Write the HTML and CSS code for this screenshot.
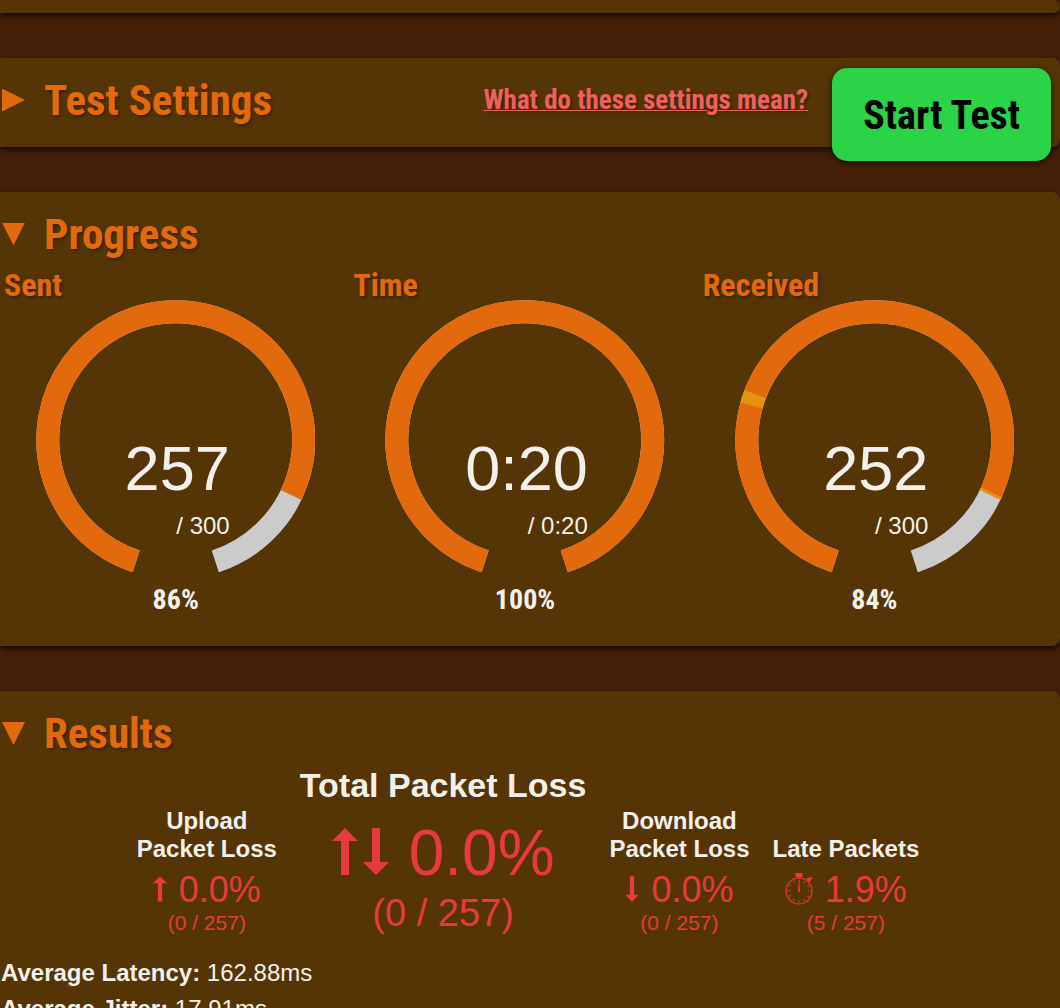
FILE: index.html
```html
<!DOCTYPE html>
<html lang="en">
<head>
    <meta charset="UTF-8">
    <meta name="viewport" content="width=device-width, initial-scale=1.0">
    <title>Packet Loss Test</title>
    <link rel="stylesheet" href="styles.css">
</head>
<body>
    <!-- shared icons -->
    <svg class="icon-defs" width="0" height="0" aria-hidden="true">
        <symbol id="arrow-up" viewBox="0 0 26 47">
            <path d="M13 0L26 13H17V47H9V13H0Z"/>
        </symbol>
        <symbol id="arrow-down" viewBox="0 0 26 47">
            <path d="M13 47L26 34H17V0H9V34H0Z"/>
        </symbol>
        <symbol id="stopwatch" viewBox="0 0 28 32">
            <path d="M10.500 0H17.500V4H16V5H12V4H10.500ZM21.500 6L23 4.500L25 5L26 3.500L27.500 5L26.500 6.500L25.500 8L24 9Z"/>
            <circle cx="14" cy="18" r="13" fill="none" stroke="currentColor" stroke-width="1.200"/>
            <circle cx="14" cy="18" r="10.500" fill="none" stroke="currentColor" stroke-width="2" stroke-dasharray="1.200 4.298" stroke-dashoffset="0.600"/>
            <path d="M13.600 8H14.400L15 19H13Z"/>
        </symbol>
    </svg>

    <main>
        <section class="panel panel-intro"></section>

        <section class="panel settings">
            <details>
                <summary><h2>Test Settings</h2></summary>
            </details>
            <a class="help-link" href="#settings-help">What do these settings mean?</a>
            <button type="button" class="start-btn">Start Test</button>
        </section>

        <section class="panel">
            <details open>
                <summary><h2>Progress</h2></summary>
                <div class="gauges">
                    <div class="gauge">
                        <h3>Sent</h3>
                        <div class="dial">
                            <svg viewBox="0 0 280 273" aria-hidden="true">
                                <path class="track" d="M100.370 261.950A128.200 128.200 0 1 1 179.630 261.950"/>
                                <path class="fill" pathLength="300" stroke-dasharray="257 400" d="M100.370 261.950A128.200 128.200 0 1 1 179.630 261.950"/>
                            </svg>
                            <div class="readout">
                                <div class="count">257</div>
                                <div class="total">/ 300</div>
                            </div>
                        </div>
                        <div class="percent">86%</div>
                    </div>
                    <div class="gauge">
                        <h3>Time</h3>
                        <div class="dial">
                            <svg viewBox="0 0 280 273" aria-hidden="true">
                                <path class="track" d="M100.370 261.950A128.200 128.200 0 1 1 179.630 261.950"/>
                                <path class="fill" d="M100.370 261.950A128.200 128.200 0 1 1 179.630 261.950"/>
                            </svg>
                            <div class="readout">
                                <div class="count">0:20</div>
                                <div class="total">/ 0:20</div>
                            </div>
                        </div>
                        <div class="percent">100%</div>
                    </div>
                    <div class="gauge">
                        <h3>Received</h3>
                        <div class="dial">
                            <svg viewBox="0 0 280 273" aria-hidden="true">
                                <path class="track" d="M100.370 261.950A128.200 128.200 0 1 1 179.630 261.950"/>
                                <path class="fill" pathLength="300" stroke-dasharray="256 400" d="M100.370 261.950A128.200 128.200 0 1 1 179.630 261.950"/>
                                <!-- late packets -->
                                <path class="late" pathLength="300" stroke-dasharray="0 81 5 170 1 400" d="M100.370 261.950A128.200 128.200 0 1 1 179.630 261.950"/>
                            </svg>
                            <div class="readout">
                                <div class="count">252</div>
                                <div class="total">/ 300</div>
                            </div>
                        </div>
                        <div class="percent">84%</div>
                    </div>
                </div>
            </details>
        </section>

        <section class="panel">
            <details open>
                <summary><h2>Results</h2></summary>
                <div class="results">
                    <div class="result">
                        <h4>Upload<br>Packet Loss</h4>
                        <div class="value"><svg class="arrow"><use href="#arrow-up"/></svg>0.0%</div>
                        <div class="detail">(0 / 257)</div>
                    </div>
                    <div class="result result-main">
                        <h4>Total Packet Loss</h4>
                        <div class="value"><svg class="arrow"><use href="#arrow-up"/></svg><svg class="arrow"><use href="#arrow-down"/></svg>0.0%</div>
                        <div class="detail">(0 / 257)</div>
                    </div>
                    <div class="result">
                        <h4>Download<br>Packet Loss</h4>
                        <div class="value"><svg class="arrow"><use href="#arrow-down"/></svg>0.0%</div>
                        <div class="detail">(0 / 257)</div>
                    </div>
                    <div class="result">
                        <h4>Late Packets</h4>
                        <div class="value"><svg class="watch"><use href="#stopwatch"/></svg>1.9%</div>
                        <div class="detail">(5 / 257)</div>
                    </div>
                </div>
                <div class="stats">
                    <div><strong>Average Latency:</strong> 162.88ms</div>
                    <div><strong>Average Jitter:</strong> 17.91ms</div>
                </div>
            </details>
        </section>
    </main>
</body>
</html>
```
FILE: styles.css
```css
* {
    box-sizing: border-box;
}
body {
    margin: 0;
    background: #452009;
    color: #f3f0ec;
    font-family: "Liberation Sans", Arial, sans-serif;
    font-size: 24px;
    overflow-x: hidden;
}
h2, h3, h4 {
    margin: 0;
}
.icon-defs {
    position: absolute;
}
.panel {
    position: relative;
    margin-bottom: 45px;
    background: #553506;
    border-radius: 0 8px 8px 0;
    box-shadow: 0 3px 6px rgba(0, 0, 0, 0.7);
}
.panel-intro {
    height: 13px;
}

/* headings */
summary {
    display: flex;
    align-items: center;
    padding: 17px 0 0 2px;
    color: #e3690d;
    cursor: pointer;
    list-style: none;
}
summary::-webkit-details-marker {
    display: none;
}
summary::before {
    content: "";
    width: 23px;
    height: 23px;
    margin-right: 19px;
    background: #e3690d;
    clip-path: polygon(0 0, 100% 50%, 0 100%);
}
details[open] > summary::before {
    clip-path: polygon(0 0, 100% 0, 50% 100%);
}
h2, h3, .help-link, .start-btn, .percent {
    font-family: "Roboto Condensed", "Arial Narrow", "Liberation Sans", sans-serif;
    font-weight: bold;
}
h2 {
    font-size: 43px;
    line-height: 50px;
    text-shadow: 2px 2px 3px rgba(0, 0, 0, 0.3);
}
h3 {
    padding-left: 3px;
    font-size: 32px;
    line-height: 30px;
    color: #e3690d;
    text-shadow: 2px 2px 3px rgba(0, 0, 0, 0.3);
}

/* settings bar */
.settings {
    display: flex;
    align-items: flex-start;
    padding-right: 252px;
    padding-bottom: 22px;
    z-index: 1;
}
.settings details {
    flex: 1;
}
.help-link {
    margin-top: 26px;
    color: #ee6060;
    font-size: 27px;
    line-height: 32px;
    text-decoration-thickness: 1px;
    text-shadow: 2px 2px 3px rgba(0, 0, 0, 0.3);
}
.start-btn {
    position: absolute;
    top: 10px;
    right: 9px;
    padding: 23px 31px 21px;
    border: none;
    border-radius: 15px;
    background: #2bd348;
    color: #000;
    font-size: 40px;
    line-height: 49px;
    cursor: pointer;
    box-shadow: 0 2px 6px rgba(0, 0, 0, 0.7);
}

/* progress gauges */
.gauges {
    display: grid;
    grid-template-columns: repeat(3, 1fr);
    padding: 11px 11px 30px 1px;
}
.dial {
    position: relative;
    width: 80%;
    margin: 0 auto;
}
.dial svg {
    display: block;
    width: 100%;
}
.dial path {
    fill: none;
    stroke-width: 23;
}
.dial .track {
    stroke: #cbcbcb;
}
.dial .fill {
    stroke: #e3690d;
}
.dial .late {
    stroke: #e5920e;
}
.readout {
    position: absolute;
    top: 50%;
    left: 50%;
    padding-left: 3px;
    transform: translateX(-50%);
    text-align: right;
}
.count {
    font-size: 63px;
    line-height: 64px;
    margin-bottom: 12px;
}
.total {
    line-height: 28px;
}
.percent {
    margin-top: 12px;
    font-size: 28px;
    line-height: 32px;
    text-align: center;
}

/* results */
.results {
    display: flex;
    justify-content: center;
    align-items: flex-end;
    gap: 23px;
    padding: 8px 4px 0 0;
    text-align: center;
}
.result h4 {
    margin-bottom: 7px;
    font-size: 24px;
    line-height: 28px;
}
.value {
    color: #e63a3c;
    font-size: 36px;
    line-height: 40px;
}
.value svg {
    fill: currentColor;
}
.detail {
    color: #e63a3c;
    font-size: 21px;
    line-height: 25px;
}
.arrow {
    width: 14px;
    height: 26px;
    margin-right: 12px;
}
.watch {
    width: 28px;
    height: 32px;
    margin-right: 12px;
    vertical-align: -3px;
}
.result-main h4 {
    margin-bottom: 17px;
    font-size: 34px;
    line-height: 38px;
}
.result-main .value {
    margin-bottom: 6px;
    font-size: 64px;
    line-height: 64px;
}
.result-main .detail {
    font-size: 38px;
    line-height: 44px;
}
.result-main .arrow {
    width: 26px;
    height: 47px;
    margin-right: 5px;
}
.result-main .arrow:last-child {
    margin-right: 20px;
}
.stats {
    padding: 20px 0 20px 1px;
    line-height: 36px;
}
```
